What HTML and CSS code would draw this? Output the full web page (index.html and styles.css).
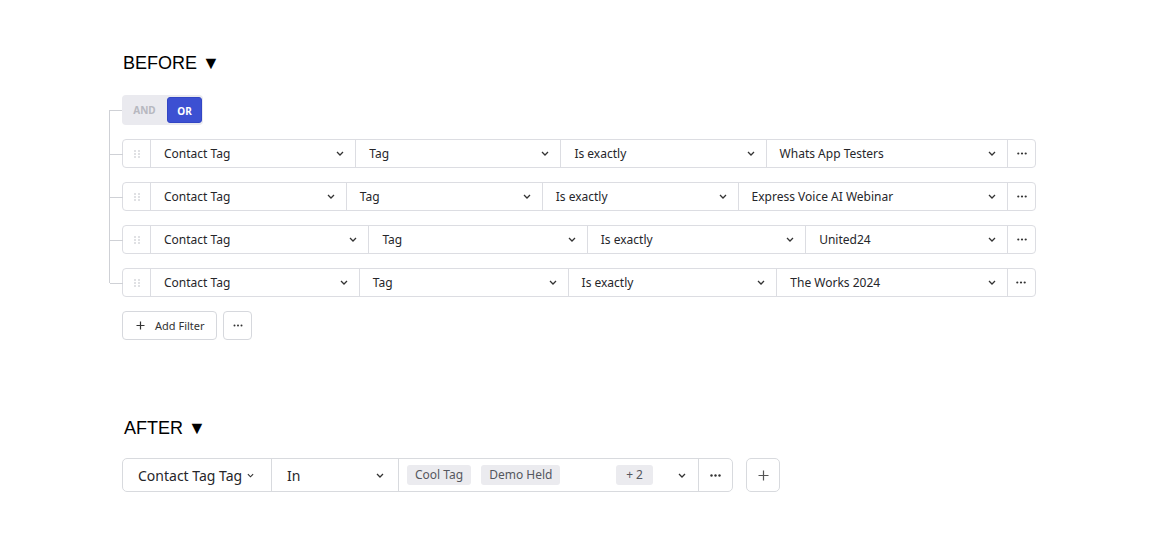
FILE: index.html
```html
<!DOCTYPE html>
<html>
<head>
<meta charset="utf-8">
<link rel="stylesheet" href="styles.css">
</head>
<body>
<div class="page">
  <section class="before">
    <h2 class="title">BEFORE ▼</h2>
    <div class="tree">
      <div class="node toggle">
        <span class="tog-opt">AND</span>
        <span class="tog-opt active">OR</span>
      </div>
      <div class="node row">
        <div class="handle"><svg width="6" height="8" viewBox="0 0 6 8"><g fill="#b9bbc2"><circle cx="1" cy="1" r="0.8"/><circle cx="5" cy="1" r="0.8"/><circle cx="1" cy="4" r="0.8"/><circle cx="5" cy="4" r="0.8"/><circle cx="1" cy="7" r="0.8"/><circle cx="5" cy="7" r="0.8"/></g></svg></div>
        <div class="seg sel"><span class="txt">Contact Tag</span><svg class="chev" width="8" height="5" viewBox="0 0 8 5"><path d="M1 1l3 3 3-3" fill="none" stroke="#333" stroke-width="1.3"/></svg></div>
        <div class="seg sel"><span class="txt">Tag</span><svg class="chev" width="8" height="5" viewBox="0 0 8 5"><path d="M1 1l3 3 3-3" fill="none" stroke="#333" stroke-width="1.3"/></svg></div>
        <div class="seg sel"><span class="txt">Is exactly</span><svg class="chev" width="8" height="5" viewBox="0 0 8 5"><path d="M1 1l3 3 3-3" fill="none" stroke="#333" stroke-width="1.3"/></svg></div>
        <div class="seg val"><span class="txt">Whats App Testers</span><svg class="chev" width="8" height="5" viewBox="0 0 8 5"><path d="M1 1l3 3 3-3" fill="none" stroke="#333" stroke-width="1.3"/></svg></div>
        <div class="more"><svg width="10" height="3" viewBox="0 0 10 3"><g fill="#333"><circle cx="1.3" cy="1.5" r="1.1"/><circle cx="5" cy="1.5" r="1.1"/><circle cx="8.7" cy="1.5" r="1.1"/></g></svg></div>
      </div>
      <div class="node row">
        <div class="handle"><svg width="6" height="8" viewBox="0 0 6 8"><g fill="#b9bbc2"><circle cx="1" cy="1" r="0.8"/><circle cx="5" cy="1" r="0.8"/><circle cx="1" cy="4" r="0.8"/><circle cx="5" cy="4" r="0.8"/><circle cx="1" cy="7" r="0.8"/><circle cx="5" cy="7" r="0.8"/></g></svg></div>
        <div class="seg sel"><span class="txt">Contact Tag</span><svg class="chev" width="8" height="5" viewBox="0 0 8 5"><path d="M1 1l3 3 3-3" fill="none" stroke="#333" stroke-width="1.3"/></svg></div>
        <div class="seg sel"><span class="txt">Tag</span><svg class="chev" width="8" height="5" viewBox="0 0 8 5"><path d="M1 1l3 3 3-3" fill="none" stroke="#333" stroke-width="1.3"/></svg></div>
        <div class="seg sel"><span class="txt">Is exactly</span><svg class="chev" width="8" height="5" viewBox="0 0 8 5"><path d="M1 1l3 3 3-3" fill="none" stroke="#333" stroke-width="1.3"/></svg></div>
        <div class="seg val"><span class="txt">Express Voice AI Webinar</span><svg class="chev" width="8" height="5" viewBox="0 0 8 5"><path d="M1 1l3 3 3-3" fill="none" stroke="#333" stroke-width="1.3"/></svg></div>
        <div class="more"><svg width="10" height="3" viewBox="0 0 10 3"><g fill="#333"><circle cx="1.3" cy="1.5" r="1.1"/><circle cx="5" cy="1.5" r="1.1"/><circle cx="8.7" cy="1.5" r="1.1"/></g></svg></div>
      </div>
      <div class="node row">
        <div class="handle"><svg width="6" height="8" viewBox="0 0 6 8"><g fill="#b9bbc2"><circle cx="1" cy="1" r="0.8"/><circle cx="5" cy="1" r="0.8"/><circle cx="1" cy="4" r="0.8"/><circle cx="5" cy="4" r="0.8"/><circle cx="1" cy="7" r="0.8"/><circle cx="5" cy="7" r="0.8"/></g></svg></div>
        <div class="seg sel"><span class="txt">Contact Tag</span><svg class="chev" width="8" height="5" viewBox="0 0 8 5"><path d="M1 1l3 3 3-3" fill="none" stroke="#333" stroke-width="1.3"/></svg></div>
        <div class="seg sel"><span class="txt">Tag</span><svg class="chev" width="8" height="5" viewBox="0 0 8 5"><path d="M1 1l3 3 3-3" fill="none" stroke="#333" stroke-width="1.3"/></svg></div>
        <div class="seg sel"><span class="txt">Is exactly</span><svg class="chev" width="8" height="5" viewBox="0 0 8 5"><path d="M1 1l3 3 3-3" fill="none" stroke="#333" stroke-width="1.3"/></svg></div>
        <div class="seg val"><span class="txt">United24</span><svg class="chev" width="8" height="5" viewBox="0 0 8 5"><path d="M1 1l3 3 3-3" fill="none" stroke="#333" stroke-width="1.3"/></svg></div>
        <div class="more"><svg width="10" height="3" viewBox="0 0 10 3"><g fill="#333"><circle cx="1.3" cy="1.5" r="1.1"/><circle cx="5" cy="1.5" r="1.1"/><circle cx="8.7" cy="1.5" r="1.1"/></g></svg></div>
      </div>
      <div class="node row">
        <div class="handle"><svg width="6" height="8" viewBox="0 0 6 8"><g fill="#b9bbc2"><circle cx="1" cy="1" r="0.8"/><circle cx="5" cy="1" r="0.8"/><circle cx="1" cy="4" r="0.8"/><circle cx="5" cy="4" r="0.8"/><circle cx="1" cy="7" r="0.8"/><circle cx="5" cy="7" r="0.8"/></g></svg></div>
        <div class="seg sel"><span class="txt">Contact Tag</span><svg class="chev" width="8" height="5" viewBox="0 0 8 5"><path d="M1 1l3 3 3-3" fill="none" stroke="#333" stroke-width="1.3"/></svg></div>
        <div class="seg sel"><span class="txt">Tag</span><svg class="chev" width="8" height="5" viewBox="0 0 8 5"><path d="M1 1l3 3 3-3" fill="none" stroke="#333" stroke-width="1.3"/></svg></div>
        <div class="seg sel"><span class="txt">Is exactly</span><svg class="chev" width="8" height="5" viewBox="0 0 8 5"><path d="M1 1l3 3 3-3" fill="none" stroke="#333" stroke-width="1.3"/></svg></div>
        <div class="seg val"><span class="txt">The Works 2024</span><svg class="chev" width="8" height="5" viewBox="0 0 8 5"><path d="M1 1l3 3 3-3" fill="none" stroke="#333" stroke-width="1.3"/></svg></div>
        <div class="more"><svg width="10" height="3" viewBox="0 0 10 3"><g fill="#333"><circle cx="1.3" cy="1.5" r="1.1"/><circle cx="5" cy="1.5" r="1.1"/><circle cx="8.7" cy="1.5" r="1.1"/></g></svg></div>
      </div>
    </div>
    <div class="actions">
      <button class="btn add"><svg width="9" height="9" viewBox="0 0 9 9"><path d="M4.5 0.5v8M0.5 4.5h8" stroke="#333" stroke-width="1.2"/></svg><span>Add Filter</span></button>
      <button class="btn square"><svg width="10" height="3" viewBox="0 0 10 3"><g fill="#333"><circle cx="1.5" cy="1.5" r="1"/><circle cx="5" cy="1.5" r="1"/><circle cx="8.5" cy="1.5" r="1"/></g></svg></button>
    </div>
  </section>

  <section class="after">
    <h2 class="title">AFTER ▼</h2>
    <div class="after-line">
      <div class="arow">
        <div class="aseg a1"><span>Contact Tag Tag</span><svg class="chev" width="8" height="5" viewBox="0 0 8 5"><path d="M1 1l3 3 3-3" fill="none" stroke="#333" stroke-width="1.3"/></svg></div>
        <div class="aseg a2"><span>In</span><svg class="chev" width="8" height="5" viewBox="0 0 8 5"><path d="M1 1l3 3 3-3" fill="none" stroke="#333" stroke-width="1.3"/></svg></div>
        <div class="aseg a3">
          <span class="chip">Cool Tag</span>
          <span class="chip">Demo Held</span>
          <span class="chip count">+ 2</span>
          <svg class="chev" width="8" height="5" viewBox="0 0 8 5"><path d="M1 1l3 3 3-3" fill="none" stroke="#333" stroke-width="1.3"/></svg>
        </div>
        <div class="aseg a4"><svg width="11" height="3" viewBox="0 0 11 3"><g fill="#333"><circle cx="1.5" cy="1.5" r="1.2"/><circle cx="5.5" cy="1.5" r="1.2"/><circle cx="9.5" cy="1.5" r="1.2"/></g></svg></div>
      </div>
      <button class="plus"><svg width="11" height="11" viewBox="0 0 11 11"><path d="M5.5 0.5v10M0.5 5.5h10" stroke="#555" stroke-width="1.2"/></svg></button>
    </div>
  </section>
</div>
</body>
</html>
```

FILE: styles.css
```css
* { box-sizing: border-box; }
html, body { margin: 0; padding: 0; background: #fff; }
body { font-family: "Noto Sans", "Open Sans", sans-serif; color: #26262a; }

.page { padding: 53px 0 0 122px; }

.title {
  margin: 0;
  font-family: "Liberation Sans", Arial, sans-serif;
  font-weight: 400;
  font-size: 18px;
  line-height: 20px;
  height: 20px;
  color: #000;
  padding-left: 1px;
}

.before .title { margin-bottom: 22px; }

.tree {
  position: relative;
  display: flex;
  flex-direction: column;
  gap: 14px;
  width: 914px;
}
.tree::before {
  content: "";
  position: absolute;
  left: -13px;
  top: 15px;
  bottom: 14px;
  border-left: 1px solid #cfd1d6;
}
.node { position: relative; }
.node::after {
  content: "";
  position: absolute;
  left: -13px;
  top: 50%;
  width: 13px;
  border-top: 1px solid #cfd1d6;
}

.toggle {
  align-self: flex-start;
  display: flex;
  align-items: center;
  width: 81px;
  height: 30px;
  padding: 2px 1px 2px 0;
  background: #eaeaef;
  border-radius: 4px;
}
.tog-opt {
  font-size: 10px;
  font-weight: 700;
  color: #b7b8c0;
  height: 26px;
  line-height: 26px;
  text-align: center;
}
.tog-opt:first-child { width: 45px; }
.tog-opt.active {
  width: 35px;
  background: #3c50d2;
  color: #fff;
  border-radius: 3px;
  border: 1px solid #3246c4;
}

.row {
  display: flex;
  height: 29px;
  border: 1px solid #dcdde2;
  border-radius: 4px;
  font-size: 12px;
  background: #fff;
}
.handle {
  width: 28px;
  flex: none;
  display: flex;
  align-items: center;
  justify-content: center;
  border-right: 1px solid #dcdde2;
}
.seg {
  display: flex;
  align-items: center;
  padding: 0 11px 0 13px;
  border-right: 1px solid #dcdde2;
  white-space: nowrap;
  min-width: 0;
}
.seg .txt { flex: 1; }
.seg .chev { flex: none; margin-left: 15px; }
.sel { flex: 1 1 116px; }
.val { flex: 1 1 auto; }
.more {
  width: 27px;
  flex: none;
  display: flex;
  align-items: center;
  justify-content: center;
}

.actions {
  display: flex;
  gap: 6px;
  margin-top: 14px;
}
.btn {
  height: 29px;
  border: 1px solid #d6d8dd;
  border-radius: 4px;
  background: #fff;
  font-family: "Noto Sans", sans-serif;
  font-size: 11px;
  color: #333;
  display: flex;
  align-items: center;
  padding: 0;
}
.btn.add { width: 95px; padding-left: 13px; gap: 10px; }
.btn.square { width: 29px; justify-content: center; }

.after { margin-top: 78px; }
.after .title { margin-left: 1px; margin-bottom: 20px; }

.after-line { display: flex; gap: 13px; }
.arow {
  display: flex;
  width: 611px;
  height: 34px;
  border: 1px solid #d8dade;
  border-radius: 5px;
  font-size: 14px;
}
.aseg {
  display: flex;
  align-items: center;
  border-right: 1px solid #d8dade;
  white-space: nowrap;
}
.a1 { width: 149px; padding-left: 15px; }
.a1 .chev { margin-left: 5px; width: 7px; }
.a2 { width: 127px; padding: 0 14px 0 15px; }
.a2 span { flex: 1; }
.a3 { flex: 1; padding: 0 12px 0 8px; gap: 10px; }
.a4 { width: 33px; border-right: none; justify-content: center; }

.chip {
  height: 20px;
  line-height: 20px;
  padding: 0 8px;
  background: #ebebef;
  border-radius: 3px;
  font-size: 12px;
  color: #55575e;
}
.chip.count { margin-left: auto; padding: 0 10px; }
.a3 .chev { margin-left: 15px; }

.plus {
  width: 34px;
  height: 34px;
  border: 1px solid #d8dade;
  border-radius: 5px;
  background: #fff;
  display: flex;
  align-items: center;
  justify-content: center;
  padding: 0;
}
```
